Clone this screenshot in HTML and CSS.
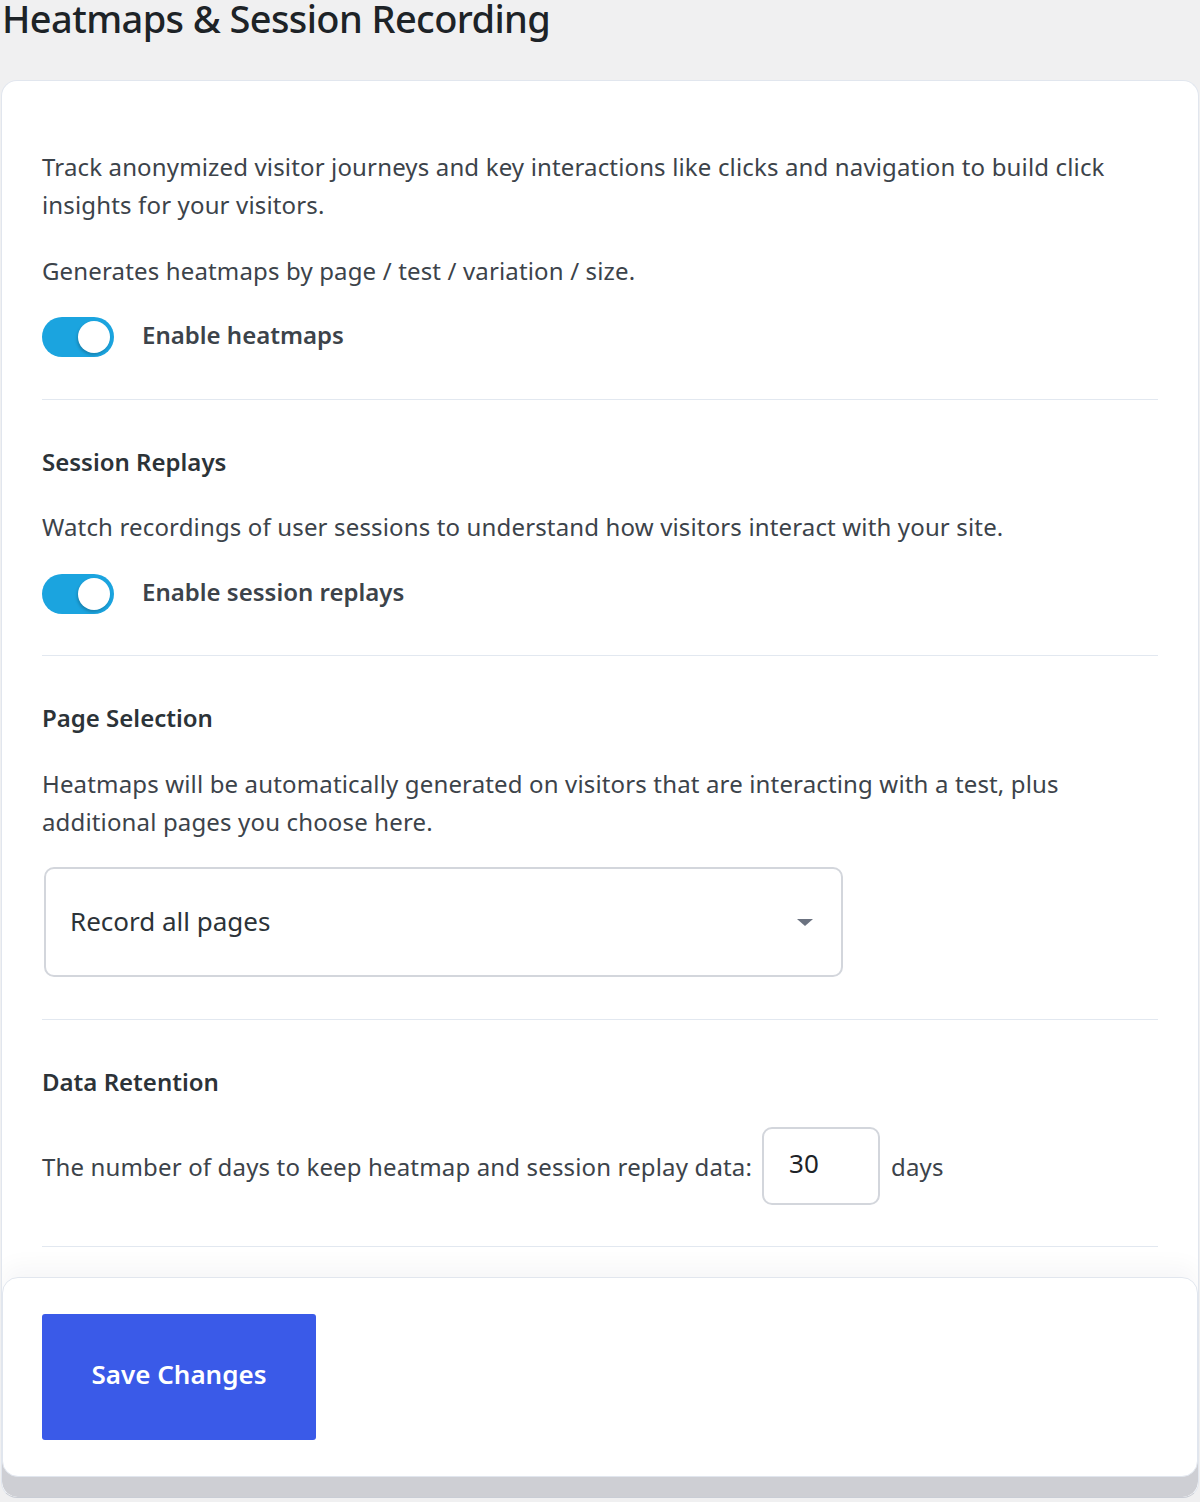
FILE: index.html
```html
<!DOCTYPE html>
<html lang="en">
<head>
<meta charset="utf-8">
<title>Heatmaps &amp; Session Recording</title>
<link rel="stylesheet" href="styles.css">
</head>
<body>
<div class="wrap">
  <h1 class="page-title">Heatmaps &amp; Session Recording</h1>
  <div class="card">
    <section class="section first">
      <p class="text">Track anonymized visitor journeys and key interactions like clicks and navigation to build click insights for your visitors.</p>
      <p class="text">Generates heatmaps by page / test / variation / size.</p>
      <div class="toggle-row">
        <span class="toggle"><span class="knob"></span></span>
        <span class="toggle-label">Enable heatmaps</span>
      </div>
    </section>
    <section class="section">
      <h2 class="sec-title">Session Replays</h2>
      <p class="text">Watch recordings of user sessions to understand how visitors interact with your site.</p>
      <div class="toggle-row">
        <span class="toggle"><span class="knob"></span></span>
        <span class="toggle-label">Enable session replays</span>
      </div>
    </section>
    <section class="section">
      <h2 class="sec-title">Page Selection</h2>
      <p class="text">Heatmaps will be automatically generated on visitors that are interacting with a test, plus additional pages you choose here.</p>
      <div class="select">
        <span class="select-value">Record all pages</span>
        <span class="caret"></span>
      </div>
    </section>
    <section class="section">
      <h2 class="sec-title">Data Retention</h2>
      <div class="retention-row">
        <span class="text-inline">The number of days to keep heatmap and session replay data:</span>
        <span class="num-input">30</span>
        <span class="text-inline">days</span>
      </div>
    </section>
    <div class="footer">
      <button class="save" type="button">Save Changes</button>
    </div>
  </div>
</div>
</body>
</html>
```

FILE: styles.css
```css
* { box-sizing: border-box; }

html, body {
  margin: 0;
  padding: 0;
}

body {
  background: #f0f0f1;
  font-family: "Noto Sans", "Open Sans", sans-serif;
  color: #3c434a;
}

.wrap {
  padding: 0 1px;
}

.page-title {
  margin: -2px 0 42px 1px;
  font-size: 38px;
  line-height: 40px;
  font-weight: 500;
  color: #1d2327;
  letter-spacing: -0.6px;
}

.card {
  background: #fff;
  border: 1px solid #e1e6ee;
  border-bottom-color: #c9cdd5;
  border-radius: 16px;
  padding: 0 40px 20px;
  overflow: hidden;
  height: 1418px;
}

.section {
  padding: 43px 0 41.5px;
  border-bottom: 1px solid #e2e8f0;
}

.section.first {
  padding-top: 67px;
}

.text {
  margin: 0 0 27.5px;
  font-size: 24px;
  line-height: 38px;
  letter-spacing: 0.15px;
}

.sec-title {
  margin: 0 0 27.5px;
  font-size: 24px;
  line-height: 38px;
  font-weight: 600;
  color: #2c3338;
}

.toggle-row {
  display: flex;
  align-items: center;
  gap: 28px;
}

.toggle {
  width: 72px;
  height: 40px;
  border-radius: 20px;
  background: #1ba4df;
  display: flex;
  align-items: center;
  justify-content: flex-end;
  padding: 0 4px;
}

.knob {
  width: 32px;
  height: 32px;
  border-radius: 50%;
  background: #fff;
  box-shadow: -1px 2px 3px rgba(0, 0, 0, 0.2);
}

.toggle-label {
  font-size: 24px;
  line-height: 34px;
  padding-bottom: 4px;
  font-weight: 600;
  color: #3c434a;
}

.select {
  margin: -1px 0 0 2px;
  width: 799px;
  height: 110px;
  border: 2px solid #d3d6dc;
  border-radius: 10px;
  display: flex;
  align-items: center;
  justify-content: space-between;
  padding: 0 28px 2px 24px;
}

.select-value {
  font-size: 26px;
  color: #2c3338;
}

.caret {
  width: 0;
  height: 0;
  margin-top: 2px;
  border-left: 8px solid transparent;
  border-right: 8px solid transparent;
  border-top: 7px solid #6b7280;
}

.retention-row {
  display: flex;
  align-items: center;
  gap: 10px;
  margin-top: -1.5px;
}

.text-inline {
  font-size: 24px;
  line-height: 38px;
  letter-spacing: 0.15px;
  padding-top: 3px;
}

.num-input {
  width: 118px;
  height: 78px;
  border: 2px solid #d3d6dc;
  border-radius: 10px;
  display: flex;
  align-items: center;
  padding: 0 0 6px 25px;
  font-size: 26px;
  color: #1d2327;
}

.num-input + .text-inline {
  margin-left: 1px;
}

.footer {
  margin: 30px -40px 0;
  border: 1px solid #e1e6ee;
  border-radius: 16px;
  background: #fff;
  padding: 36px 39px;
  box-shadow: 0 20px 0 0 #cecfd4, 0 -12px 22px rgba(30, 41, 59, 0.035);
}

.save {
  display: block;
  width: 274px;
  height: 126px;
  border: 0;
  border-radius: 3px;
  padding: 0 0 6px;
  background: #3a5ae8;
  color: #fff;
  font-family: "Noto Sans", "Open Sans", sans-serif;
  font-size: 26px;
  font-weight: 600;
  cursor: pointer;
}
```
